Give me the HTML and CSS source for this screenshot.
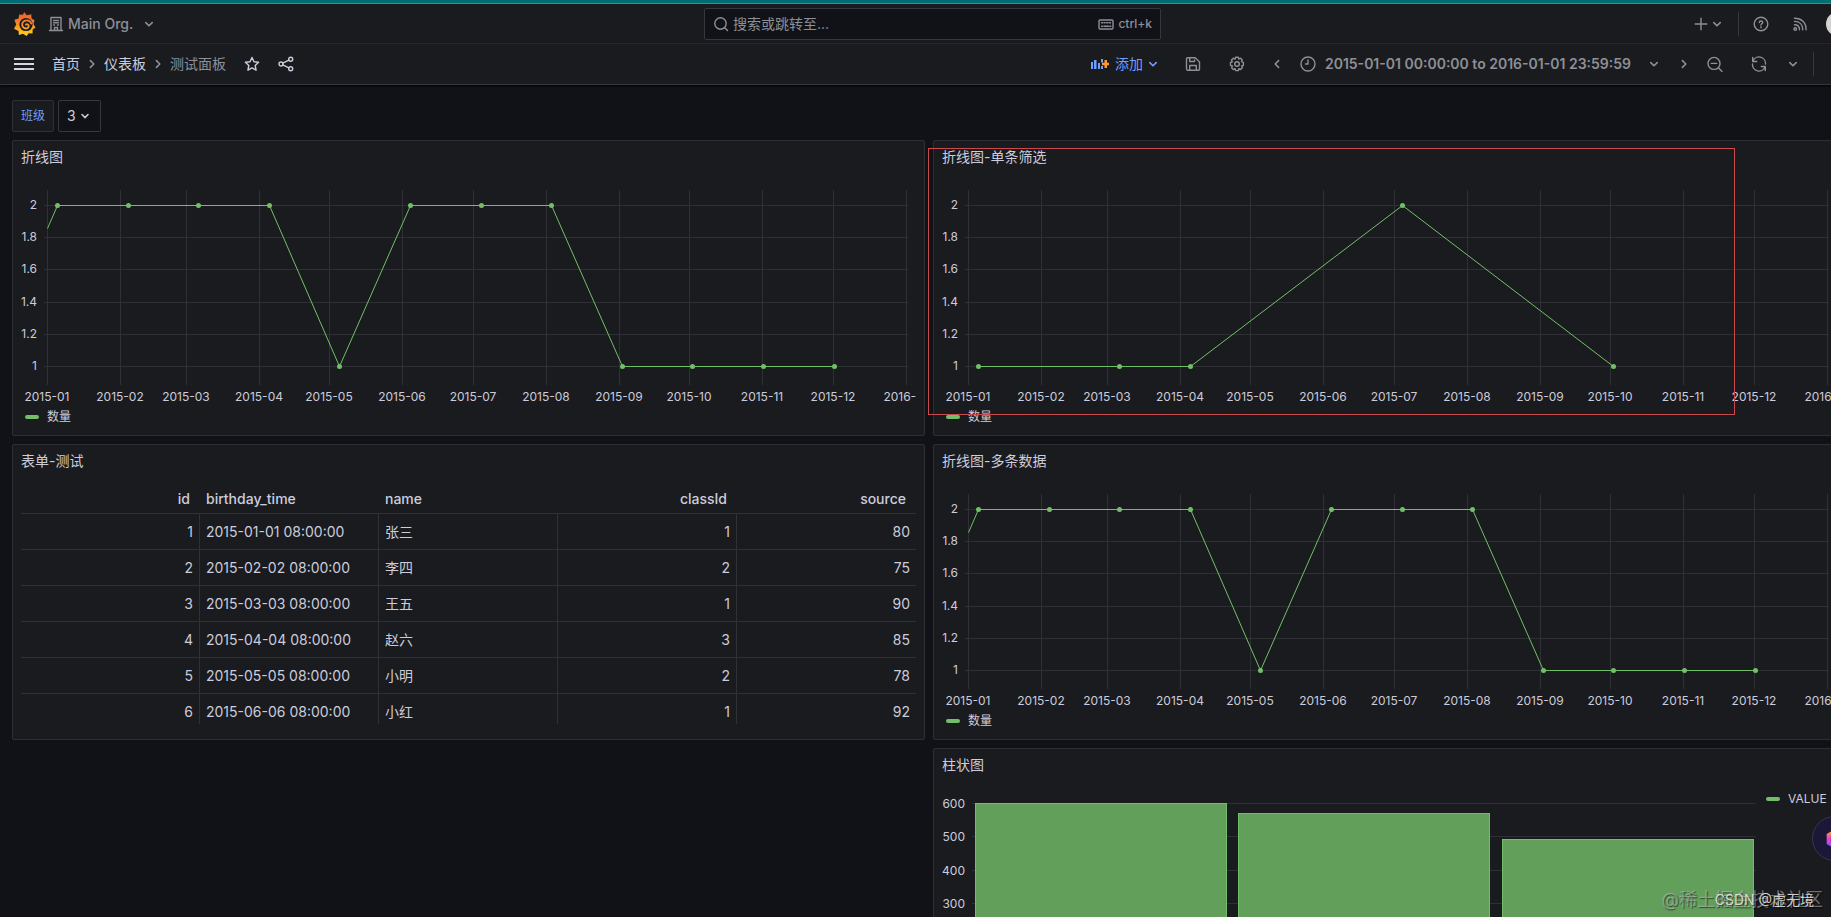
FILE: index.html
```html
<!DOCTYPE html>
<html lang="zh-CN">
<head>
<meta charset="utf-8">
<title>测试面板 - 仪表板 - Grafana</title>
<link rel="stylesheet" href="styles.css">
</head>
<body>
<svg class="defs" aria-hidden="true">
  <symbol id="chev-down" viewBox="0 0 16 16"><path d="M4.800 6.600L8 9.800l3.200-3.200"/></symbol>
  <symbol id="chev-right" viewBox="0 0 16 16"><path d="M6.400 4.600L9.800 8l-3.400 3.400"/></symbol>
  <symbol id="chev-left" viewBox="0 0 16 16"><path d="M9.600 4.600L6.200 8l3.400 3.400"/></symbol>
  <symbol id="chev-up" viewBox="0 0 16 16"><path d="M4.500 9.500L8 6l3.500 3.500"/></symbol>
</svg>
<div class="shell">
  <header class="topbar">
    <div class="topbar-left">
      <a class="logo" href="#" aria-label="Grafana">
        <svg viewBox="0 0 24 26" width="24" height="26">
          <defs><linearGradient id="lg" gradientUnits="userSpaceOnUse" x1="0" y1="25" x2="0" y2="1"><stop offset="0" stop-color="#fcd913"/><stop offset=".5" stop-color="#f9892a"/><stop offset="1" stop-color="#f05a28"/></linearGradient></defs>
          <path fill="url(#lg)" d="M12.200 1l2.600 3.200 4.500-1 .2 4.200 3 1.800-1 3.800 2 3.400-2.800 2.200-.2 3.800-3.900-.2-2 2.800-3.600-2.200-4.100 1.100-.4-4-4.500-2.100 2.200-4.200L2.400 8.800l4.200-1.400.6-4 3.700.4z"/>
          <circle cx="14" cy="13.500" r="6.600" fill="#1a1b1f"/>
          <path fill="none" stroke="url(#lg)" stroke-width="1.800" stroke-linecap="round" d="M19.300 12.600c-.6-2.200-2.600-3.400-4.800-3.300-2.900.2-4.600 2.400-4.300 4.900.3 2.300 2.400 3.700 4.500 3.200 1.900-.5 2.600-2.500 1.500-3.700-.8-.8-1.900-.6-2.300.1"/>
        </svg>
      </a>
      <button class="org">
        <svg class="icon" viewBox="0 0 16 16" width="16" height="16"><path d="M1.500 14.500h13M3 14.500v-13h10v13M6.500 14.500v-3h3v3M5.500 4.500h1M9.500 4.500h1M5.500 6.800h1M9.500 6.800h1M5.500 9h1M9.500 9h1M7.500 4.500h1M7.500 6.800h1"/></svg>
        <span>Main Org.</span>
        <svg class="icon chev" width="16" height="16"><use href="#chev-down"/></svg>
      </button>
    </div>
    <div class="search">
      <svg class="icon" viewBox="0 0 16 16" width="16" height="16"><circle cx="7.500" cy="7.500" r="5.700"/><path d="M11.700 11.700L14.500 14.500"/></svg>
      <input type="text" aria-label="搜索" placeholder="搜索或跳转至...">
      <span class="hint"><svg class="icon" viewBox="0 0 16 16" width="16" height="16"><rect x="1" y="4" width="14" height="9" rx="1"/><path d="M3.500 6.800h1M6 6.800h1M8.500 6.800h1M11 6.800h1.500M3.500 10.200h1M6 10.200h4.500M11.800 10.200h1"/></svg>ctrl+k</span>
    </div>
    <div class="topbar-right">
      <button class="new" aria-label="新建"><svg class="icon" viewBox="0 0 16 16" width="16" height="16"><path d="M8 2.200v11.600M2.200 8h11.600"/></svg><svg class="icon chev" width="16" height="16"><use href="#chev-down"/></svg></button>
      <span class="divider"></span>
      <button class="slot help" aria-label="帮助"><svg class="icon" viewBox="0 0 16 16" width="16" height="16"><circle cx="8" cy="8" r="6.800"/><path d="M6.300 6.600c0-2.200 3.400-2.200 3.400 0 0 1.200-1.700 1.200-1.700 2.400M8 10.700v1.100"/></svg></button>
      <button class="slot news" aria-label="新闻"><svg class="icon" viewBox="0 0 16 16" width="16" height="16"><circle cx="3.200" cy="13" r="1.300"/><path d="M2.500 8.700c3 0 5 2 5 5M2.500 5.400c5 0 8.300 3.300 8.300 8.300M2.500 2.200c7 0 11.600 4.500 11.600 11.500"/></svg></button>
      <button class="avatar" aria-label="用户"></button>
    </div>
  </header>
  <nav class="toolbar">
    <div class="crumbs">
      <button class="menu" aria-label="菜单"><svg viewBox="0 0 20 14" width="20" height="14"><path d="M0 2h20M0 7h20M0 12h20"/></svg></button>
      <a href="#">首页</a>
      <svg class="icon sep" width="16" height="16"><use href="#chev-right"/></svg>
      <a href="#">仪表板</a>
      <svg class="icon sep" width="16" height="16"><use href="#chev-right"/></svg>
      <span class="current">测试面板</span>
      <button class="star" aria-label="收藏"><svg class="icon" viewBox="0 0 16 16" width="16" height="16"><path d="M8 1.500l2 4.200 4.600.6-3.400 3.200.9 4.600L8 11.800l-4.100 2.300.9-4.600L1.400 6.300 6 5.700z"/></svg></button>
      <button class="share" aria-label="分享"><svg class="icon" viewBox="0 0 16 16" width="16" height="16"><circle cx="3" cy="8" r="2"/><circle cx="12.700" cy="3.200" r="2"/><circle cx="12.700" cy="12.800" r="2"/><path d="M4.800 7.100l6.100-3M4.800 8.900l6.100 3"/></svg></button>
    </div>
    <div class="actions">
      <button class="add">
        <svg viewBox="0 0 18 14" width="18" height="14"><path fill="#6e9fff" d="M0 5h2v7H0zM3 3h2.500v9H3zM7 6h2v6H7zM10 2h2v3.500h-2zM10 9h2v3h-2z"/><path fill="#ff9830" d="M13.500 3h2.500v2.800h2v2.500h-2V11h-2.500V8.300H11V5.800h2.500z"/></svg>
        <span>添加</span>
        <svg class="icon chev" width="16" height="16"><use href="#chev-down"/></svg>
      </button>
      <button class="slot" aria-label="保存"><svg class="icon" viewBox="0 0 16 16" width="16" height="16"><path d="M1.500 3a1.300 1.300 0 0 1 1.300-1.300h7.400l4.300 4.300v7a1.300 1.300 0 0 1-1.300 1.300H2.800A1.300 1.300 0 0 1 1.500 13zM4.700 2v3.500h4.800V4M4.700 14v-4.500h6.600V14"/></svg></button>
      <button class="slot" aria-label="设置"><svg class="icon" viewBox="0 0 16 16" width="16" height="16"><circle cx="8" cy="8" r="2.300"/><path d="M6.700 1.300h2.600l.5 1.700 1.700-.8 1.800 1.800-.8 1.700 1.900.7v2.900l-1.800.7.800 1.700-1.900 1.800-1.700-.8-.5 1.900H6.700l-.6-1.900-1.700.8-1.800-1.800.8-1.700-1.900-.7V6.500l1.800-.7-.8-1.700 1.900-1.900 1.700.8z"/></svg></button>
      <button class="prev" aria-label="后退"><svg class="icon chev" width="16" height="16"><use href="#chev-left"/></svg></button>
      <button class="range">
        <svg class="icon" viewBox="0 0 16 16" width="16" height="16"><circle cx="8" cy="8" r="7"/><path d="M8 4v4H5.500"/></svg>
        <span>2015-01-01 00:00:00 to 2016-01-01 23:59:59</span>
        <svg class="icon chev" width="16" height="16"><use href="#chev-down"/></svg>
      </button>
      <button class="next" aria-label="前进"><svg class="icon chev" width="16" height="16"><use href="#chev-right"/></svg></button>
      <button class="slot" aria-label="缩小"><svg class="icon" viewBox="0 0 16 16" width="16" height="16"><circle cx="7" cy="7.400" r="6"/><path d="M11.400 11.800L15 15.400M4.300 7.400h5.400"/></svg></button>
      <button class="slot" aria-label="刷新"><svg class="icon" viewBox="0 0 16 16" width="16" height="16"><path d="M1.700 1.500v4h4M1.900 5.300A6.500 6.500 0 0 1 14.500 8M14.300 14.500v-4h-4M14.100 10.700A6.500 6.500 0 0 1 1.500 8"/></svg></button>
      <button class="interval" aria-label="刷新间隔"><svg class="icon chev" width="16" height="16"><use href="#chev-down"/></svg></button>
      <span class="divider"></span>
      <button class="slot" aria-label="收起"><svg class="icon chev" width="16" height="16"><use href="#chev-up"/></svg></button>
    </div>
  </nav>
  <main class="dashboard">
    <div class="variables">
      <label for="class-var">班级</label>
      <select id="class-var"><option>3</option></select>
    </div>
    <div class="grid">
      <section class="panel">
        <h2>折线图</h2>
        <svg class="chart line" viewBox="0 0 895 226" data-points="1:2,2:2,3:2,4:2,5:1,6:2,7:2,8:2,9:1,10:1,11:1,12:1" data-lead="1"></svg>
        <div class="legend"><i></i>数量</div>
      </section>
      <section class="panel">
        <h2>折线图-单条筛选</h2>
        <svg class="chart line" viewBox="0 0 895 226" data-points="1:1,3:1,4:1,7:2,10:1"></svg>
        <div class="legend"><i></i>数量</div>
        <div class="marker"></div>
      </section>
      <section class="panel">
        <h2>表单-测试</h2>
        <div class="table-wrap">
          <table>
            <thead><tr><th class="num">id</th><th>birthday_time</th><th>name</th><th class="num">classId</th><th class="num">source</th></tr></thead>
            <tbody>
              <tr><td class="num">1</td><td>2015-01-01 08:00:00</td><td>张三</td><td class="num">1</td><td class="num">80</td></tr>
              <tr><td class="num">2</td><td>2015-02-02 08:00:00</td><td>李四</td><td class="num">2</td><td class="num">75</td></tr>
              <tr><td class="num">3</td><td>2015-03-03 08:00:00</td><td>王五</td><td class="num">1</td><td class="num">90</td></tr>
              <tr><td class="num">4</td><td>2015-04-04 08:00:00</td><td>赵六</td><td class="num">3</td><td class="num">85</td></tr>
              <tr><td class="num">5</td><td>2015-05-05 08:00:00</td><td>小明</td><td class="num">2</td><td class="num">78</td></tr>
              <tr><td class="num">6</td><td>2015-06-06 08:00:00</td><td>小红</td><td class="num">1</td><td class="num">92</td></tr>
            </tbody>
          </table>
        </div>
      </section>
      <section class="panel">
        <h2>折线图-多条数据</h2>
        <svg class="chart line" viewBox="0 0 895 226" data-points="1:2,2:2,3:2,4:2,5:1,6:2,7:2,8:2,9:1,10:1,11:1,12:1" data-lead="1"></svg>
        <div class="legend"><i></i>数量</div>
      </section>
      <section class="panel bars">
        <h2>柱状图</h2>
        <div class="bars-body">
          <svg class="chart bar" viewBox="0 0 815 246" data-values="602,572,494"></svg>
          <div class="legend"><i></i>VALUE</div>
        </div>
      </section>
    </div>
  </main>
</div>
<button class="assistant" aria-label="助手"><svg viewBox="0 0 24 24" width="20" height="20"><defs><linearGradient id="as" x1="0" y1="0" x2="0" y2="1"><stop offset="0" stop-color="#ff9a3c"/><stop offset=".5" stop-color="#f03fc8"/><stop offset="1" stop-color="#7a5cff"/></linearGradient></defs><path fill="none" stroke="url(#as)" stroke-width="5" d="M12 3l7.500 4.500v9L12 21l-7.500-4.500v-9z"/></svg></button>
<div class="watermark community">@稀土掘金技术社区</div>
<div class="watermark author">CSDN @虚无境</div>
<script src="charts.js"></script>
</body>
</html>
```
FILE: styles.css
```css
* { box-sizing: border-box; }
body {
  margin: 0;
  height: 100vh;
  overflow: hidden;
  position: relative;
  background: #111217;
  color: #ccccdc;
  font: 14px/22px Inter, "Noto Sans CJK SC", sans-serif;
}
button {
  display: flex;
  align-items: center;
  justify-content: center;
  padding: 0;
  border: 0;
  background: none;
  color: inherit;
  font: inherit;
}
a { color: inherit; text-decoration: none; }
svg { flex: none; }
.defs { display: none; }
.icon { fill: none; stroke: currentColor; stroke-width: 1.4; stroke-linecap: round; stroke-linejoin: round; }
.icon.chev, .icon.sep { stroke-width: 1.6; }
.shell {
  width: calc(100% + 27px);
  height: 100%;
  overflow: hidden;
  border-top: 3px solid #006d75;
}

.topbar {
  display: grid;
  grid-template-columns: 1fr 457px 1fr;
  align-items: center;
  height: 41px;
  padding-left: 7px;
  border-top: 1px solid #2f9299;
  border-bottom: 1px solid #303136;
  background: #1a1b1f;
  color: #8e8f97;
}
.topbar-left, .topbar-right { display: flex; align-items: center; }
.topbar-left { padding-left: 5px; }
.topbar-right { justify-content: flex-end; padding-right: 8px; }
.logo { display: flex; margin-right: 12px; }
.org { gap: 4px; font-weight: 500; }
.org .chev { margin-left: 4px; }
.search {
  display: flex;
  align-items: center;
  height: 32px;
  padding: 0 8px;
  border: 1px solid #36373c;
  border-radius: 2px;
  background: #111217;
}
.search input {
  flex: 1;
  min-width: 0;
  margin-left: 4px;
  padding: 0;
  border: 0;
  outline: 0;
  background: none;
  font: inherit;
}
.search input::placeholder { color: #8e8f97; opacity: 1; }
.hint { display: flex; align-items: center; gap: 4px; font-size: 12px; font-weight: 500; }
.slot { width: 44px; height: 32px; }
.new { margin-right: 13px; }
.divider { width: 1px; height: 24px; background: #36373c; }
.help, .news { width: 39px; }
.avatar { width: 24px; height: 24px; margin-left: 7px; border-radius: 50%; background: #d6d4d2; }
.help { margin-left: 2px; }

.toolbar {
  display: flex;
  justify-content: space-between;
  align-items: center;
  height: 41px;
  border-bottom: 1px solid #36373c;
  background: #1a1b1f;
  box-shadow: 0 1px 3px #000;
}
.crumbs, .actions { display: flex; align-items: center; }
.crumbs { padding-left: 14px; }
.crumbs .sep { margin: 0 4px; color: #8e8f97; }
.menu { margin-right: 18px; stroke: #d4d4e0; stroke-width: 2; }
.current { color: #8e8f97; }
.star { margin-left: 18px; }
.share { margin-left: 18px; }
.actions { color: #8e8f97; }
.add { gap: 6px; margin-right: 10px; color: #6e9fff; }
.add .chev { margin-left: -4px; }
.prev { width: 36px; }
.range { gap: 9px; margin: 0 13px 0 5px; font-weight: 600; }
.range .chev { margin-left: 6px; }
.next { width: 18px; }
.interval { width: 24px; margin-right: 8px; }

.dashboard { padding: 15px 12px 12px; }
.variables { display: flex; gap: 4px; height: 32px; margin-bottom: 8px; }
.variables label {
  padding: 0 8px;
  border: 1px solid #2e3036;
  border-radius: 2px;
  background: #1a1b1f;
  color: #6e9fff;
  font-size: 12px;
  line-height: 30px;
}
.variables select {
  width: 43px;
  padding: 0 8px;
  border: 1px solid #36373c;
  border-radius: 2px;
  appearance: none;
  background: #111217 url("data:image/svg+xml,%3Csvg xmlns='http://www.w3.org/2000/svg' width='16' height='16' fill='none' stroke='%23ccccdc' stroke-width='1.600' stroke-linecap='round'%3E%3Cpath d='M5 6.500l3 3 3-3'/%3E%3C/svg%3E") no-repeat right 7px center;
  color: #ccccdc;
  font: inherit;
}
.grid { display: grid; grid-template-columns: 1fr 1fr; gap: 8px; }
.panel {
  position: relative;
  min-width: 0;
  min-height: 296px;
  padding: 0 8px 8px;
  border: 1px solid #2d2f34;
  border-radius: 2px;
  background: #1a1b1f;
}
.panel h2 { margin: 0 0 8px; font-size: 14px; font-weight: 400; line-height: 32px; }
.chart { display: block; width: 100%; }
.chart text { fill: #ccccdc; font-size: 12px; }
.chart .grid-line { stroke: #2e3035; }
.chart .series { fill: none; stroke: #73bf69; }
.chart .dot { fill: #73bf69; }
.chart .column { fill: #629f5b; stroke: #73bf69; }
.legend { display: flex; align-items: center; gap: 8px; padding-left: 4px; font-size: 12px; line-height: 20px; }
.legend i { width: 14px; height: 4px; border-radius: 2px; background: #73bf69; }
.marker {
  position: absolute;
  top: 7px;
  left: -6px;
  width: calc(100% - 104px);
  height: 267px;
  border: 1px solid #c94a4d;
}
.bars { grid-column: 2; }
.bars-body { display: flex; align-items: flex-start; }
.bars-body .chart { flex: 1; min-width: 0; }
.bars-body .legend { width: 80px; padding-left: 9px; }

.table-wrap { height: 239px; overflow: hidden; }
table { width: 100%; table-layout: fixed; border-collapse: separate; border-spacing: 0; }
th { height: 29px; padding: 0 10px 0 6px; border-bottom: 1px solid #2f3136; font-weight: 500; text-align: left; }
td { height: 36px; padding: 0 6px; border-right: 1px solid #2f3136; border-bottom: 1px solid #2f3136; }
td:last-child { border-right: 0; }
.num { text-align: right; }

.assistant {
  position: absolute;
  top: 816px;
  right: -26px;
  width: 45px;
  height: 45px;
  border: 1px solid #37364d;
  border-radius: 50%;
  background: #1b1738;
}
.watermark { position: absolute; bottom: 6px; white-space: nowrap; }
.community { right: 8px; color: rgba(200, 200, 200, .5); font-size: 18px; text-shadow: 1px 1px 1px rgba(0, 0, 0, .5); }
.author { right: 17px; color: rgba(235, 235, 235, .85); text-shadow: 1px 1px 1px rgba(0, 0, 0, .5); }
```
FILE: charts.js
```js
const NS = "http://www.w3.org/2000/svg";

function add(svg, name, attrs, text) {
  const el = document.createElementNS(NS, name);
  for (const key in attrs) el.setAttribute(key, attrs[key]);
  if (text !== undefined) el.textContent = text;
  svg.appendChild(el);
}

const tickX = [26.5, 99.5, 165.5, 238.5, 308.5, 381.5, 452.5, 525.5, 598.5, 668.5, 741.5, 812.5, 885.5];
const pointX = [36.5, 107.5, 177.5, 248.5, 318.5, 389.5, 460.5, 530.5, 601.5, 671.5, 742.5, 813.5];
const months = ["2015-01", "2015-02", "2015-03", "2015-04", "2015-05", "2015-06", "2015-07",
  "2015-08", "2015-09", "2015-10", "2015-11", "2015-12", "2016-01"];
const valueY = v => 24.5 + (2 - v) * 161;

document.querySelectorAll(".chart.line").forEach(svg => {
  [2, 1.8, 1.6, 1.4, 1.2, 1].forEach(v => {
    const y = Math.floor(valueY(v)) + 0.5;
    add(svg, "line", { class: "grid-line", x1: 23, x2: 887, y1: y, y2: y });
    add(svg, "text", { x: 16, y: y + 3.5, "text-anchor": "end" }, v);
  });
  tickX.forEach((x, i) => {
    add(svg, "line", { class: "grid-line", x1: x, x2: x, y1: 9, y2: 204 });
    add(svg, "text", { x: x - 0.5, y: 220, "text-anchor": "middle" }, months[i]);
  });
  const points = svg.dataset.points.split(",").map(p => {
    const [month, value] = p.split(":").map(Number);
    return [pointX[month - 1], valueY(value)];
  });
  const path = svg.dataset.lead ? [[26.5, 47.5], ...points] : points;
  add(svg, "polyline", { class: "series", points: path.join(" ") });
  points.forEach(([cx, cy]) => add(svg, "circle", { class: "dot", cx, cy, r: 2.5 }));
});

document.querySelectorAll(".chart.bar").forEach(svg => {
  const y = v => 15.5 + (600 - v) / 3;
  for (let v = 600; v >= 0; v -= 100) {
    const line = Math.floor(y(v)) - 0.5;
    add(svg, "line", { class: "grid-line", x1: 30, x2: 814, y1: line, y2: line });
    add(svg, "text", { x: 23, y: line + 4, "text-anchor": "end" }, v);
  }
  svg.dataset.values.split(",").forEach((v, i) => {
    const top = Math.round(y(v)) - 0.5;
    add(svg, "rect", { class: "column", x: 33.5 + Math.floor(i * 263.5), y: top, width: 251, height: 215.5 - top });
  });
});
```
